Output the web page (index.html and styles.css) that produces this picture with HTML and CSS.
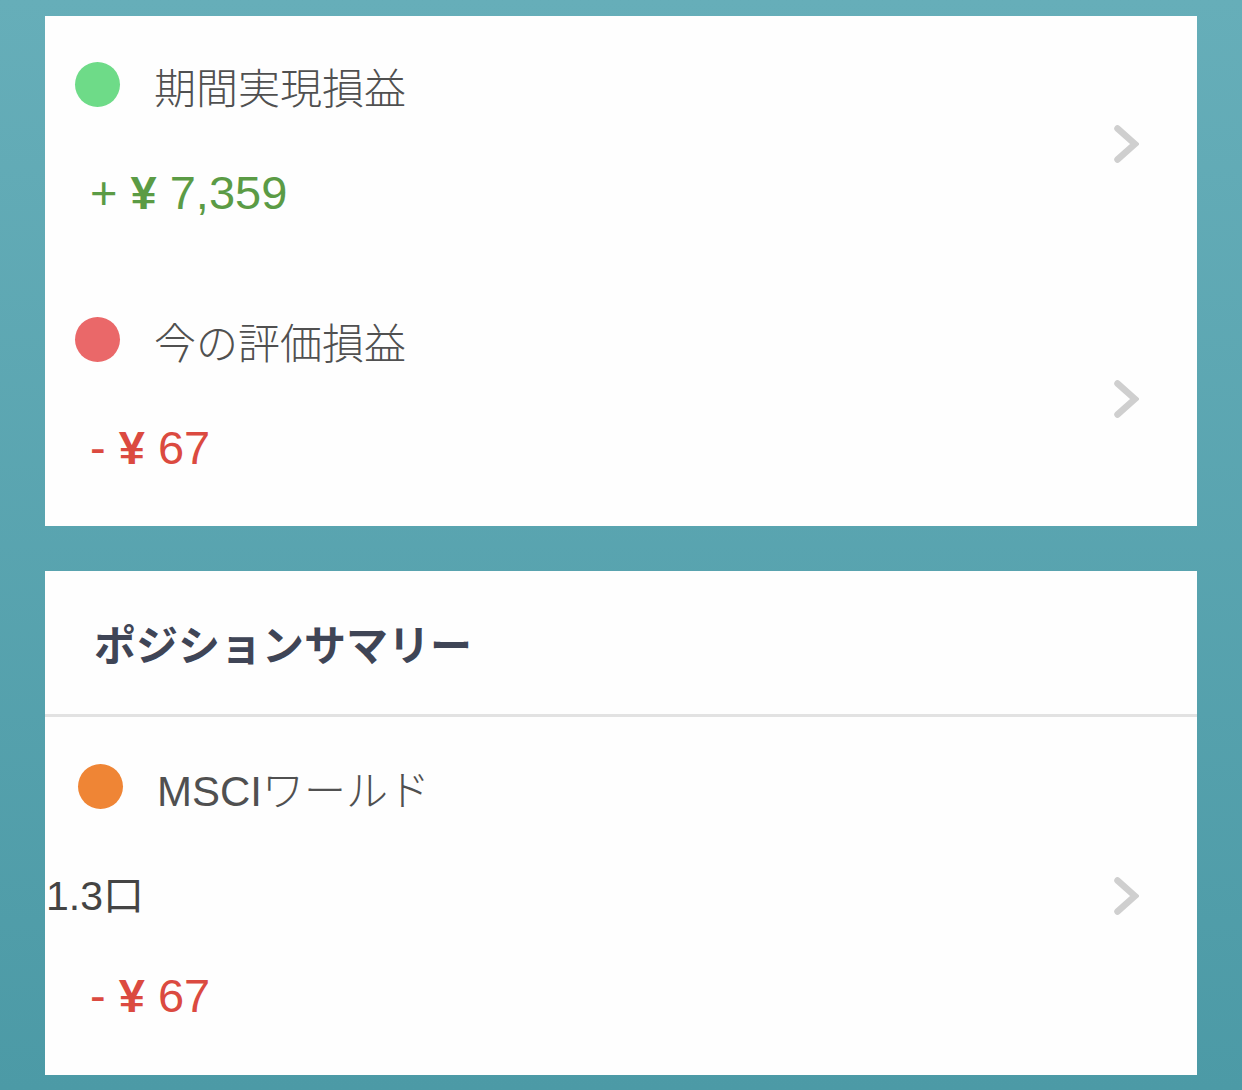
FILE: index.html
```html
<!DOCTYPE html>
<html lang="ja">
<head>
<meta charset="utf-8">
<link rel="stylesheet" href="styles.css">
</head>
<body>
<div class="page">
  <section class="card">
    <div class="row">
      <div class="row-main">
        <div class="row-head">
          <span class="dot dot-green"></span>
          <span class="label">期間実現損益</span>
        </div>
        <div class="value value-plus">+ <span class="yen">¥</span> 7,359</div>
      </div>
      <svg class="chev" width="25" height="38" viewBox="0 0 25 38"><polyline points="3.5,3.5 21,19 3.5,34.5" fill="none" stroke="#cfcfcf" stroke-width="6.5" stroke-linecap="round" stroke-linejoin="miter"/></svg>
    </div>
    <div class="row">
      <div class="row-main">
        <div class="row-head">
          <span class="dot dot-red"></span>
          <span class="label">今の評価損益</span>
        </div>
        <div class="value value-minus">- <span class="yen">¥</span> 67</div>
      </div>
      <svg class="chev" width="25" height="38" viewBox="0 0 25 38"><polyline points="3.5,3.5 21,19 3.5,34.5" fill="none" stroke="#cfcfcf" stroke-width="6.5" stroke-linecap="round" stroke-linejoin="miter"/></svg>
    </div>
  </section>

  <section class="card">
    <div class="card-header">ポジションサマリー</div>
    <div class="row row-position">
      <div class="row-main">
        <div class="row-head row-head-pos">
          <span class="dot dot-orange"></span>
          <span class="label">MSCIワールド</span>
        </div>
        <div class="qty">1.3口</div>
        <div class="value value-minus value-pos">- <span class="yen">¥</span> 67</div>
      </div>
      <svg class="chev" width="25" height="38" viewBox="0 0 25 38"><polyline points="3.5,3.5 21,19 3.5,34.5" fill="none" stroke="#cfcfcf" stroke-width="6.5" stroke-linecap="round" stroke-linejoin="miter"/></svg>
    </div>
  </section>
</div>
</body>
</html>
```
FILE: styles.css
```css
html, body {
  margin: 0;
  padding: 0;
}
body {
  width: 1242px;
  height: 1090px;
  overflow: hidden;
  background: linear-gradient(180deg, #66aeb9 0%, #4c9aa6 100%);
  font-family: "Liberation Sans", "Noto Sans CJK JP", sans-serif;
}
.page {
  display: flex;
  flex-direction: column;
  gap: 45px;
  padding: 16px 45px 0;
}
.card {
  background: #fefefe;
  display: flex;
  flex-direction: column;
}
.row {
  display: flex;
  align-items: center;
  justify-content: space-between;
  height: 255px;
  padding-right: 58px;
  box-sizing: border-box;
}
.row-main {
  display: flex;
  flex-direction: column;
  padding-top: 41px;
  padding-bottom: 48px;
  gap: 46px;
  align-self: stretch;
  box-sizing: border-box;
}
.row-head {
  display: flex;
  align-items: center;
  height: 60px;
  padding-left: 30px;
  gap: 34px;
}
.dot {
  width: 45px;
  height: 45px;
  border-radius: 50%;
  flex: none;
  position: relative;
  top: -3px;
}
.dot-green { background: #6edb88; }
.dot-red { background: #ea6869; }
.dot-orange { background: #ef8535; }
.label {
  font-family: "Liberation Sans", "Noto Sans CJK JP", sans-serif;
  font-size: 42px;
  font-weight: 300;
  color: #505050;
  line-height: 60px;
  position: relative;
  top: 3px;
}
.value {
  height: 60px;
  line-height: 60px;
  font-size: 47px;
  padding-left: 45px;
  white-space: pre;
}
.yen {
  font-weight: 700;
}
.value-plus { color: #5b9b45; }
.value-minus { color: #db4a40; }
.card-header {
  box-sizing: border-box;
  border-bottom: 3px solid #e2e2e2;
  height: 146px;
  display: flex;
  align-items: center;
  padding-left: 49px;
  font-family: "Noto Sans CJK JP", sans-serif;
  font-size: 42px;
  font-weight: 700;
  color: #3f4556;
}
.row-position {
  height: 358px;
}
.row-position .row-main {
  padding-top: 42px;
  padding-bottom: 49px;
  gap: 0;
}
.row-head-pos {
  padding-left: 33px;
}
.qty {
  height: 60px;
  line-height: 60px;
  margin-top: 47px;
  font-size: 41px;
  color: #444444;
  padding-left: 1px;
}
.value-pos {
  margin-top: 40px;
}
```
